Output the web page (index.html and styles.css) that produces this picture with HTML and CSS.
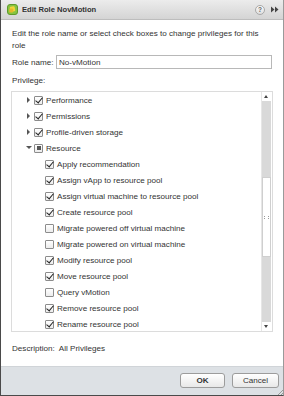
FILE: index.html
```html
<!DOCTYPE html>
<html lang="en">
<head>
    <meta charset="UTF-8">
    <title>Edit Role NovMotion</title>
    <link rel="stylesheet" href="styles.css">
</head>
<body>
    <div class="dialog">
        <div class="titlebar">
            <svg class="app-icon" width="11" height="11" viewBox="0 0 11 11">
                <rect x="0.5" y="0.5" width="10" height="10" rx="2.5" fill="#86c440" stroke="#5f9a2a"/>
                <rect x="3" y="2.5" width="5" height="5" rx="1" fill="#f3d43a" transform="rotate(-12 5.5 5)"/>
                <rect x="2.2" y="4.6" width="4" height="4" rx="1" fill="#e4b92a"/>
            </svg>
            <span class="title">Edit Role NovMotion</span>
            <span class="help">?</span>
            <svg class="expand" width="8" height="7" viewBox="0 0 8 7">
                <path d="M0 0.5 L3.5 3.5 L0 6.5 Z M4 0.5 L7.5 3.5 L4 6.5 Z" fill="#444"/>
            </svg>
        </div>

        <div class="content">
            <p class="intro">Edit the role name or select check boxes to change privileges for this role</p>

            <div class="field">
                <label for="roleName">Role name:</label>
                <input id="roleName" type="text" value="No-vMotion">
            </div>

            <div class="label">Privilege:</div>

            <div class="tree">
                <div class="tree-list">
                    <div class="row"><span class="arrow closed"></span><span class="cb checked"></span>Performance</div>
                    <div class="row"><span class="arrow closed"></span><span class="cb checked"></span>Permissions</div>
                    <div class="row"><span class="arrow closed"></span><span class="cb checked"></span>Profile-driven storage</div>
                    <div class="row"><span class="arrow open"></span><span class="cb partial"></span>Resource</div>
                    <div class="row child"><span class="arrow"></span><span class="cb checked"></span>Apply recommendation</div>
                    <div class="row child"><span class="arrow"></span><span class="cb checked"></span>Assign vApp to resource pool</div>
                    <div class="row child"><span class="arrow"></span><span class="cb checked"></span>Assign virtual machine to resource pool</div>
                    <div class="row child"><span class="arrow"></span><span class="cb checked"></span>Create resource pool</div>
                    <div class="row child"><span class="arrow"></span><span class="cb"></span>Migrate powered off virtual machine</div>
                    <div class="row child"><span class="arrow"></span><span class="cb"></span>Migrate powered on virtual machine</div>
                    <div class="row child"><span class="arrow"></span><span class="cb checked"></span>Modify resource pool</div>
                    <div class="row child"><span class="arrow"></span><span class="cb checked"></span>Move resource pool</div>
                    <div class="row child"><span class="arrow"></span><span class="cb"></span>Query vMotion</div>
                    <div class="row child"><span class="arrow"></span><span class="cb checked"></span>Remove resource pool</div>
                    <div class="row child"><span class="arrow"></span><span class="cb checked"></span>Rename resource pool</div>
                </div>
                <div class="scrollbar">
                    <div class="sb-btn up"></div>
                    <div class="sb-track">
                        <div class="sb-thumb"><span class="grip"></span></div>
                    </div>
                    <div class="sb-btn down"></div>
                </div>
            </div>

            <div class="description">Description:&nbsp; All Privileges</div>
        </div>

        <div class="footer">
            <button class="btn ok">OK</button>
            <button class="btn">Cancel</button>
            <span class="resize"></span>
        </div>
    </div>
</body>
</html>
```

FILE: styles.css
```css
body {
    margin: 0;
    font-family: "Liberation Sans", Arial, sans-serif;
    font-size: 8.1px;
    color: #333;
    background: #fff;
}
.dialog {
    width: 284px;
    height: 396px;
    box-sizing: border-box;
    border-left: 1px solid #4a4a4a;
    border-bottom: 1px solid #4a4a4a;
    border-right: 1px solid #9a9a9a;
    display: flex;
    flex-direction: column;
    background: #fff;
}
.titlebar {
    height: 20px;
    box-sizing: border-box;
    display: flex;
    align-items: center;
    padding: 0 3px 0 6px;
    background: linear-gradient(#ececec, #d4d4d4);
    border-bottom: 1px solid #bdbdbd;
}
.app-icon {
    margin-right: 4px;
}
.title {
    flex: 1;
    font-weight: bold;
    font-size: 7.6px;
    color: #333;
}
.help {
    width: 8px;
    height: 8px;
    border: 1px solid #a8a8a8;
    border-radius: 50%;
    background: linear-gradient(#fafafa, #dedede);
    font-size: 6.5px;
    font-weight: bold;
    color: #666;
    display: flex;
    align-items: center;
    justify-content: center;
    margin-right: 6px;
}
.expand {
    margin-right: 1px;
}
.content {
    flex: 1;
    padding: 8px 10px 0 11px;
}
.intro {
    margin: 0;
    line-height: 11.5px;
    padding-right: 8px;
}
.field {
    display: flex;
    align-items: center;
    margin-top: 4px;
}
.field label {
    width: 44px;
}
.field input {
    flex: 1;
    height: 14px;
    box-sizing: border-box;
    border: 1px solid #b8b8b8;
    padding: 0 2px;
    font-family: inherit;
    font-size: 8.1px;
    color: #333;
    margin-right: 1px;
    outline: none;
}
.label {
    margin-top: 6px;
    line-height: 11px;
}
.tree {
    margin-top: 5px;
    margin-left: -1px;
    height: 241px;
    box-sizing: border-box;
    border: 1px solid #dcdcdc;
    display: flex;
    overflow: hidden;
}
.tree-list {
    flex: 1;
    overflow: hidden;
}
.row {
    height: 16px;
    display: flex;
    align-items: center;
    padding-left: 14px;
    white-space: nowrap;
}
.row.child {
    padding-left: 25px;
}
.arrow {
    width: 8px;
    height: 6px;
    position: relative;
}
.arrow.closed::before {
    content: "";
    position: absolute;
    left: 1px;
    top: 0;
    border-left: 3px solid #555;
    border-top: 3px solid transparent;
    border-bottom: 3px solid transparent;
}
.arrow.open::before {
    content: "";
    position: absolute;
    left: 0;
    top: 1px;
    border-top: 3px solid #555;
    border-left: 3px solid transparent;
    border-right: 3px solid transparent;
}
.cb {
    width: 9px;
    height: 9px;
    box-sizing: border-box;
    border: 1px solid #8c8c8c;
    border-radius: 1px;
    background: linear-gradient(#fff, #ececec);
    margin-right: 3px;
    position: relative;
}
.cb.checked::after {
    content: "";
    position: absolute;
    left: 2px;
    top: -1px;
    width: 3px;
    height: 6px;
    border-right: 1.6px solid #222;
    border-bottom: 1.6px solid #222;
    transform: rotate(40deg);
}
.cb.partial::after {
    content: "";
    position: absolute;
    left: 1.5px;
    top: 1.5px;
    width: 4px;
    height: 4px;
    background: #555;
}
.scrollbar {
    width: 9px;
    display: flex;
    flex-direction: column;
    margin-right: 1px;
    border-left: 1px solid #e6e6e6;
}
.sb-btn {
    height: 9px;
    background: #fff;
    position: relative;
}
.sb-btn.up::before {
    content: "";
    position: absolute;
    left: 2px;
    top: 3px;
    border-bottom: 3px solid #444;
    border-left: 2.5px solid transparent;
    border-right: 2.5px solid transparent;
}
.sb-btn.down::before {
    content: "";
    position: absolute;
    left: 2px;
    top: 3px;
    border-top: 3px solid #444;
    border-left: 2.5px solid transparent;
    border-right: 2.5px solid transparent;
}
.sb-track {
    flex: 1;
    background: #d9d9d9;
    padding-top: 76px;
}
.sb-thumb {
    height: 80px;
    box-sizing: border-box;
    background: #fff;
    border: 1px solid #cfcfcf;
    display: flex;
    align-items: center;
    justify-content: center;
}
.grip {
    width: 3px;
    height: 3px;
    border-left: 1px dotted #999;
    border-right: 1px dotted #999;
}
.description {
    margin-top: 11px;
    line-height: 11px;
}
.footer {
    height: 29px;
    box-sizing: border-box;
    background: #dde1e5;
    border-top: 1px solid #d0d4d8;
    display: flex;
    align-items: center;
    justify-content: flex-end;
    gap: 7px;
    padding: 0 4px 2px 0;
    position: relative;
}
.btn {
    height: 15px;
    width: 45px;
    padding: 0;
    border: 1px solid #9c9c9c;
    border-radius: 3px;
    background: linear-gradient(#ffffff, #e8e8e8);
    font-family: inherit;
    font-size: 8.1px;
    color: #333;
}
.btn.ok {
    font-weight: bold;
}
.btn + .btn {
    width: 47px;
}
.resize {
    position: absolute;
    right: 0;
    bottom: 0;
    width: 5px;
    height: 5px;
    background: linear-gradient(135deg, transparent 50%, #9a9a9a 50%, #9a9a9a 60%, transparent 60%, transparent 75%, #9a9a9a 75%, #9a9a9a 85%, transparent 85%);
}
```
